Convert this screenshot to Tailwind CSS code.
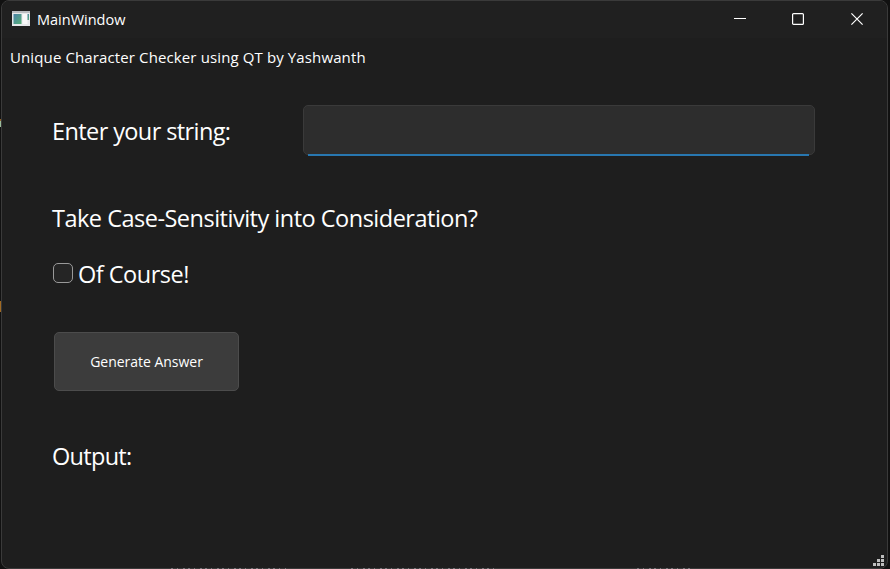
<!DOCTYPE html>
<html lang="en">
<head>
<meta charset="utf-8">
<title>MainWindow</title>
<script src="https://cdn.jsdelivr.net/npm/@tailwindcss/browser@4"></script>
</head>
<body class="relative h-[569px] w-[890px] overflow-hidden bg-[#111111] pl-px font-['Open_Sans','Noto_Sans',sans-serif] text-white">
<!-- Slivers of the desktop behind the window -->
<div class="absolute left-0 top-[119px] h-[8px] w-px border-t-2 border-[#916126] bg-[#9bbd9c]"></div>
<div class="absolute left-0 top-[301px] h-[11px] w-px bg-[#a16a22]"></div>
<div class="flex h-[569px] w-[887px] flex-col overflow-hidden rounded-lg border border-[#3a3a3a] bg-[#1e1e1e]">
  <header class="flex h-[37px] shrink-0 items-center bg-[#202020] pl-[10px]">
    <svg class="mr-[7px] h-[15px] w-[18px] -translate-y-px" viewBox="0 0 18 15">
      <defs><linearGradient id="g" x1="0" y1="0" x2="1" y2="1"><stop offset="0" stop-color="#4a82a8"/><stop offset="1" stop-color="#58b078"/></linearGradient></defs>
      <path fill="#e6e8ea" d="M0 0h18v15H0z"/>
      <path fill="#b9bcc0" d="M0 0h18v2H0z"/>
      <path fill="url(#g)" d="M1.500 3h8v10h-8z"/>
      <path fill="#f8f8f8" d="M10.500 3h5v10h-5z"/>
      <path fill="url(#g)" d="M15.500 3h1.500v6h-1.500z"/>
    </svg>
    <h1 class="text-[14.500px] leading-[20px] tracking-[0px]">MainWindow</h1>
    <div class="ml-auto mr-[23px] flex -translate-y-px items-center text-white">
      <svg class="mr-[45px] h-[14px] w-[13px]" viewBox="0 0 13 14"><path d="M0 6.500h12" stroke="currentColor"/></svg>
      <svg class="mr-[46px] h-[14px] w-[13px]" viewBox="0 0 13 14"><rect x=".6" y="1.600" width="10.800" height="10.800" rx="1" fill="none" stroke="currentColor" stroke-width="1.200"/></svg>
      <svg class="h-[14px] w-[13px]" viewBox="0 0 13 14"><path d="M.4 1.400l11.200 11.200M11.600 1.400L.4 12.600" stroke="currentColor" stroke-width="1.200"/></svg>
    </div>
  </header>
  <main class="flex flex-1 flex-col items-start whitespace-nowrap">
    <p class="mt-[9px] pl-[8px] text-[15px] leading-[20px] tracking-[0.120px]">Unique Character Checker using QT by Yashwanth</p>
    <div class="mt-[37px] flex h-[52px] items-center pl-[50px]">
      <label for="s" class="w-[251px] pt-[2px] text-[23.500px] leading-[32px] tracking-[-0.600px]">Enter your string:</label>
      <div class="relative h-[51px] w-[512px]">
        <input id="s" class="block h-[50px] w-full rounded-[5px] border border-[#3a3a3a] bg-[#2d2d2d] px-2 outline-none">
        <div class="absolute bottom-0 left-[5px] h-[2px] w-[501px] bg-[#2877b0]"></div>
      </div>
    </div>
    <p class="mt-[46px] pl-[50px] text-[23.500px] leading-[32px] tracking-[-0.500px]">Take Case-Sensitivity into Consideration?</p>
    <div class="mt-[24px] flex h-[32px] items-center pl-[51px]">
      <span class="mr-[5px] h-[20px] w-[20px] -translate-y-px rounded-[5px] border border-[#999999] bg-[#252525]"></span>
      <span class="text-[23.500px] leading-[32px] tracking-[-0.500px]">Of Course!</span>
    </div>
    <button class="ml-[52px] mt-[42px] h-[59px] w-[185px] rounded-[5px] border border-[#4c4c4c] bg-[#3c3c3c] text-[14px] tracking-[-0.020px]">Generate Answer</button>
    <p class="mt-[49px] pl-[50px] text-[23.500px] leading-[32px] tracking-[-0.700px]">Output:</p>
    <svg class="mb-[2px] ml-auto mr-[3px] mt-auto h-[11px] w-[11px]" viewBox="0 0 11 11" fill="#bfbfbf"><path d="M8 0h3v3H8zM4 4h3v3H4zM8 4h3v3H8zM0 8h3v3H0zM4 8h3v3H4zM8 8h3v3H8z"/></svg>
  </main>
</div>
<svg class="absolute left-0 top-[568px] h-px w-[890px]" viewBox="0 0 890 1"><path d="M171 .5h115M351 .5h144M637 .5h54" stroke="#77747a" stroke-dasharray="2 4 1 5 2 3"/></svg>
</body>
</html>
